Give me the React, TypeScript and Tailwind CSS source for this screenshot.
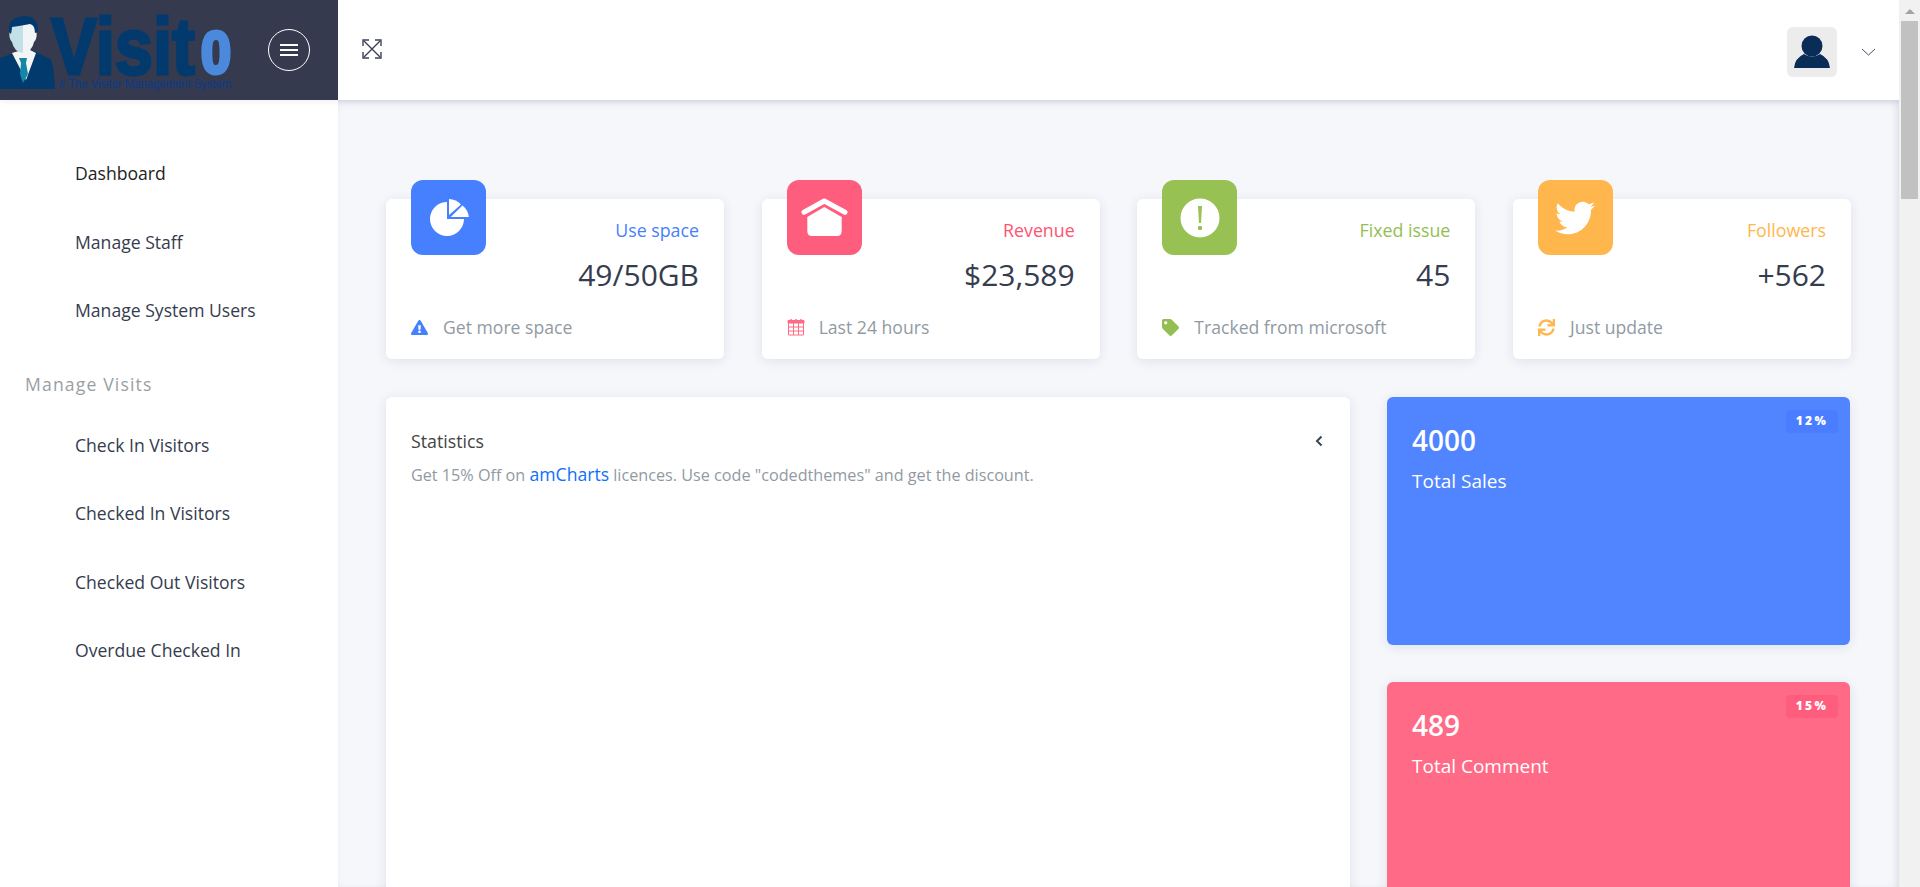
import React from 'react';
import { FaExclamationTriangle, FaTag, FaSync, FaTwitter } from 'react-icons/fa';

const Logo = () => (
  <svg width="232" height="100" viewBox="0 0 232 100" className="shrink-0">
    {/* man */}
    <path d="M0 58 L14 53 L20 50 L32 50 L38 53 L50 59 Q54 63 55 89 L0 89 Z" fill="#033a6e" />
    <path d="M12 53 L22 50 L30 50 L36 53 L26 80 Z" fill="#f4f6f6" />
    <path d="M19 58 L27 58 L26 63 L28 74 L23 83 L20 74 L21 63 Z" fill="#1487a8" />
    <path d="M10 30 Q9 21 23 21 L23 53 Q14 52 12 42 Q8 38 10 30 Z" fill="#c3dfe8" />
    <path d="M23 21 Q37 21 36 30 Q38 38 34 42 Q32 52 23 53 Z" fill="#f2f5f5" />
    <path d="M9 32 Q7 17 24 16 Q39 16 38 32 L35 33 Q35 25 30 24 Q20 26 12 27 Q12 30 11 34 Z" fill="#033a6e" />
    {/* wordmark */}
    <text x="51" y="74" fontFamily="'Liberation Sans', sans-serif" fontWeight="700" fontSize="80" fill="#033a6e" stroke="#033a6e" strokeWidth="3" textLength="144" lengthAdjust="spacingAndGlyphs">Visit</text>
    <text x="201" y="73" fontFamily="'Liberation Sans', sans-serif" fontWeight="700" fontSize="60" fill="#4a89dc" stroke="#4a89dc" strokeWidth="4" textLength="30" lengthAdjust="spacingAndGlyphs">0</text>
    <text x="59" y="88" fontFamily="'Liberation Sans', sans-serif" fontSize="12" fill="#0a3a8c" textLength="172" lengthAdjust="spacingAndGlyphs"># The Visitor Management System</text>
  </svg>
);

const FullscreenIcon = () => (
  <svg width="22" height="22" viewBox="0 0 22 22" fill="none" stroke="#3d4256" strokeWidth="1.4">
    <path d="M3 3 L19 19 M19 3 L3 19" />
    <path d="M2 8 V2 H8 M14 2 H20 V8 M2 14 V20 H8 M14 20 H20 V14" />
  </svg>
);

const PieIcon = () => (
  <svg width="75" height="75" viewBox="0 0 75 75" fill="#fff">
    <path d="M36 39 L36 22 A17 17 0 1 0 53 39 Z" />
    <path d="M38 35 L38 19 A17 17 0 0 1 50 24.5 Z" />
    <path d="M39.7 37 L51.5 25.5 A17 17 0 0 1 57.8 37 Z" />
  </svg>
);

const HomeIcon = () => (
  <svg width="75" height="75" viewBox="0 0 75 75" fill="#fff">
    <path d="M17 32.3 L37.3 21 L58 32.3" fill="none" stroke="#fff" strokeWidth="5" strokeLinecap="round" strokeLinejoin="round" />
    <path d="M20.3 37 L37.3 27 L54.7 37 V51 Q54.7 56 50 56 H25 Q20.3 56 20.3 51 Z" />
  </svg>
);

const AlertIcon = () => (
  <svg width="40" height="40" viewBox="0 0 40 40">
    <circle cx="20" cy="20" r="19.5" fill="#fff" />
    <path d="M18 8 H22 L21 25 H19 Z" fill="#97c152" />
    <circle cx="20" cy="30" r="2.2" fill="#97c152" />
  </svg>
);

const CalendarIcon = () => (
  <svg width="18" height="18" viewBox="0 0 18 18" fill="none" stroke="#ff5370" strokeWidth="1" opacity="0.85">
    <path d="M1 2.5 H17 V5 H1 Z" fill="#ff5370" />
    <path d="M1.5 5 V17 H16.5 V5 M1.5 9 H16.5 M1.5 13 H16.5 M6.5 5 V17 M11.5 5 V17" />
    <path d="M4 1 V3 M9 1 V3 M14 1 V3" strokeWidth="1.5" />
  </svg>
);

const AvatarIcon = () => (
  <div className="flex h-[50px] w-[50px] items-center justify-center rounded-md bg-[#ececec]">
    <svg width="50" height="50" viewBox="0 0 50 50" fill="#0a2d57">
      <circle cx="25" cy="19" r="10.5" />
      <path d="M7 41 Q8 31 17 27 Q25 32 33 27 Q42 31 43 41 Z" />
    </svg>
  </div>
);

const navTop = ['Dashboard', 'Manage Staff', 'Manage System Users'];
const navVisits = ['Check In Visitors', 'Checked In Visitors', 'Checked Out Visitors', 'Overdue Checked In'];

const stats = [
  { label: 'Use space', value: '49/50GB', foot: 'Get more space', bg: 'bg-[#4680ff]', text: 'text-[#4680ff]', icon: <PieIcon />, footIcon: <FaExclamationTriangle className="text-[#4680ff]" size={17} /> },
  { label: 'Revenue', value: '$23,589', foot: 'Last 24 hours', bg: 'bg-[#ff5d7d]', text: 'text-[#ff5370]', icon: <HomeIcon />, footIcon: <CalendarIcon /> },
  { label: 'Fixed issue', value: '45', foot: 'Tracked from microsoft', bg: 'bg-[#97c152]', text: 'text-[#93be52]', icon: <AlertIcon />, footIcon: <FaTag className="text-[#93be52]" size={17} /> },
  { label: 'Followers', value: '+562', foot: 'Just update', bg: 'bg-[#ffb64d]', text: 'text-[#ffb64d]', icon: <FaTwitter color="#fff" size={40} />, footIcon: <FaSync className="text-[#ffb64d]" size={17} /> },
];

const StatCard = ({ s }: { s: (typeof stats)[number] }) => (
  <div className="relative h-[160px] rounded-md bg-white shadow-[0_2px_12px_rgba(30,40,80,0.1)]">
    <div className={`absolute left-[25px] top-[-19px] flex h-[75px] w-[75px] items-center justify-center rounded-xl ${s.bg}`}>
      {s.icon}
    </div>
    <div className="flex h-full flex-col px-[25px]">
      <div className={`mt-[19px] text-right text-[17.8px] font-medium leading-6 ${s.text}`}>{s.label}</div>
      <div className="mt-[12px] text-right text-[30px] leading-[42px] text-[#353c4e]">{s.value}</div>
      <div className="mt-[19px] flex h-6 items-center text-[17.6px] text-[#919aa3]">
        <span className="flex w-[32px] shrink-0">{s.footIcon}</span>
        {s.foot}
      </div>
    </div>
  </div>
);

const ColorCard = ({ value, label, pct, bg, badge }: { value: string; label: string; pct: string; bg: string; badge: string }) => (
  <div className={`relative h-[248px] shrink-0 rounded-md px-[25px] pt-[22px] text-white shadow-[0_2px_12px_rgba(30,40,80,0.1)] ${bg}`}>
    <div className={`absolute right-[12px] top-[12.5px] flex h-[23px] w-[52px] items-center justify-center rounded text-xs font-black tracking-[0.2em] ${badge}`}>{pct}</div>
    <div className="text-[28px] font-semibold leading-[42px]">{value}</div>
    <div className="mt-[5.5px] text-[19px] leading-[28px]">{label}</div>
  </div>
);

export default function App() {
  return (
    <div className="flex h-screen overflow-hidden font-['Open_Sans',sans-serif] text-[#353c4e]">
      <div className="flex min-w-0 flex-1 flex-col">
        <header className="relative z-10 flex h-[100px] shrink-0 items-center bg-white shadow-[0_1px_6px_rgba(30,40,80,0.08)]">
          <div className="flex h-full w-[338px] shrink-0 items-center bg-[#353a4f]">
            <Logo />
            <button className="ml-[36px] flex h-[42px] w-[42px] items-center justify-center rounded-full border border-white">
              <span className="flex w-[18px] flex-col gap-[2.5px]">
                <span className="h-[2.5px] bg-white" />
                <span className="h-[2.5px] bg-white" />
                <span className="h-[2.5px] bg-white" />
              </span>
            </button>
          </div>
          <div className="mb-[3px] ml-[23px]"><FullscreenIcon /></div>
          <div className="ml-auto flex items-center pr-[23px] pt-[4px]">
            <AvatarIcon />
            <svg className="ml-[24px]" width="15" height="8" viewBox="0 0 15 8" fill="none" stroke="#4a4f63" strokeWidth="1"><path d="M1 1 L7.5 7 L14 1" /></svg>
          </div>
        </header>
        <div className="flex min-h-0 flex-1">
          <aside className="w-[338px] shrink-0 bg-white pt-[39px] text-[17.6px] text-[#353c4e]">
            {navTop.map((n, i) => (
              <div key={n} className={`flex h-[68.5px] items-center pl-[75px] ${i === 0 ? 'text-[#222]' : ''}`}>{n}</div>
            ))}
            <div className="mt-[13.5px] flex h-[53px] items-center pl-[25px] tracking-[1.15px] text-[#999fa4]">Manage Visits</div>
            {navVisits.map((n) => (
              <div key={n} className="flex h-[68.4px] items-center pl-[75px]">{n}</div>
            ))}
          </aside>
          <main className="min-w-0 flex-1 overflow-hidden bg-[#f6f7fb] px-[48px] pt-[99px] shadow-[inset_0_5px_8px_-3px_rgba(30,40,80,0.1),inset_-5px_0_8px_-3px_rgba(30,40,80,0.1)]">
            <div className="grid grid-cols-4 gap-x-[37.67px]">
              {stats.map((s) => <StatCard key={s.label} s={s} />)}
            </div>
            <div className="mt-[38px] flex gap-[37px]">
              <section className="h-[600px] w-[964px] shrink-0 rounded-md bg-white px-[25px] pt-[32px] shadow-[0_2px_12px_rgba(30,40,80,0.1)]">
                <div className="flex items-center justify-between">
                  <h5 className="text-[17.8px] font-medium leading-6 text-[#444]">Statistics</h5>
                  <svg className="mr-[2px]" width="8" height="12" viewBox="0 0 8 12" fill="none" stroke="#37474f" strokeWidth="2"><path d="M6.5 1.5 L2 6 L6.5 10.5" /></svg>
                </div>
                <p className="mt-[7px] text-[16.2px] leading-[28px] text-[#919aa3]">
                  Get 15% Off on <a className="text-[17.6px] text-[#0d6efd]">amCharts</a> licences. Use code "codedthemes" and get the discount.
                </p>
              </section>
              <div className="flex min-w-0 flex-1 flex-col gap-[37px] pr-[1px]">
                <ColorCard value="4000" label="Total Sales" pct="12%" bg="bg-[#5085ff]" badge="bg-[#4a7dff]" />
                <ColorCard value="489" label="Total Comment" pct="15%" bg="bg-[#ff6a87]" badge="bg-[#ff5d7d]" />
              </div>
            </div>
          </main>
        </div>
      </div>
      {/* page scrollbar */}
      <div className="relative z-20 flex w-[21px] shrink-0 flex-col items-center bg-[#f1f1f1]">
        <div className="mt-[9px] h-0 w-0 border-x-[5px] border-b-[5px] border-x-transparent border-b-[#a3a3a3]" />
        <div className="mt-[7px] h-[178px] w-[17px] bg-[#c1c1c1]" />
      </div>
    </div>
  );
}
